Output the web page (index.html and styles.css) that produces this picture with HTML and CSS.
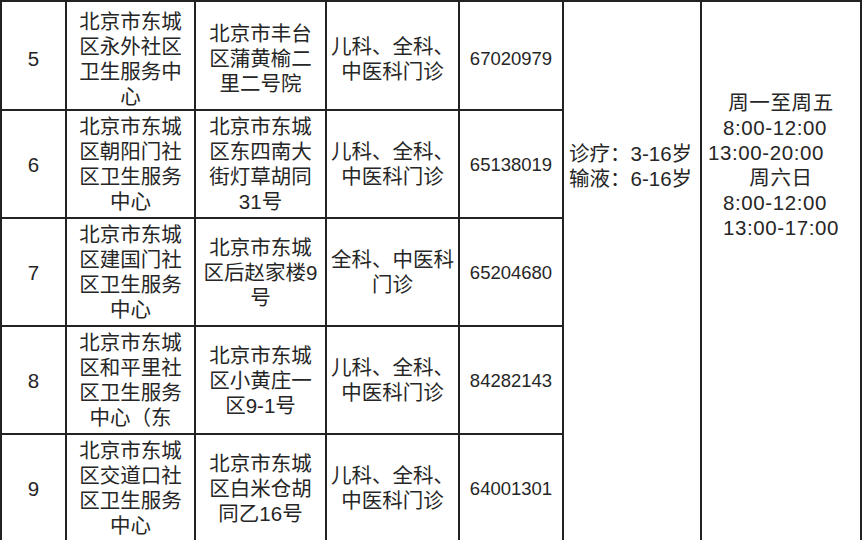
FILE: index.html
```html
<!DOCTYPE html>
<html lang="zh-CN">
<head>
<meta charset="utf-8">
<title>社区卫生服务中心</title>
<link rel="stylesheet" href="styles.css">
</head>
<body>
<div class="sheet">
  <div class="cell idx r1">5</div>
  <div class="cell r1">北京市东城<br>区永外社区<br>卫生服务中<br>心</div>
  <div class="cell r1">北京市丰台<br>区蒲黄榆二<br>里二号院</div>
  <div class="cell r1">儿科、全科、<br>中医科门诊</div>
  <div class="cell phone r1">67020979</div>
  <div class="cell age">诊疗：3-16岁<br>输液：6-16岁</div>
  <div class="cell hours">
    <div class="hl">周一至周五</div>
    <div class="hl sa">8:00-12:00</div>
    <div class="hl sb">13:00-20:00</div>
    <div class="hl">周六日</div>
    <div class="hl sa">8:00-12:00</div>
    <div class="hl">13:00-17:00</div>
  </div>

  <div class="cell idx">6</div>
  <div class="cell">北京市东城<br>区朝阳门社<br>区卫生服务<br>中心</div>
  <div class="cell">北京市东城<br>区东四南大<br>街灯草胡同<br>31号</div>
  <div class="cell">儿科、全科、<br>中医科门诊</div>
  <div class="cell phone">65138019</div>

  <div class="cell idx">7</div>
  <div class="cell">北京市东城<br>区建国门社<br>区卫生服务<br>中心</div>
  <div class="cell">北京市东城<br>区后赵家楼9<br>号</div>
  <div class="cell">全科、中医科<br>门诊</div>
  <div class="cell phone">65204680</div>

  <div class="cell idx">8</div>
  <div class="cell">北京市东城<br>区和平里社<br>区卫生服务<br>中心（东</div>
  <div class="cell">北京市东城<br>区小黄庄一<br>区9-1号</div>
  <div class="cell">儿科、全科、<br>中医科门诊</div>
  <div class="cell phone">84282143</div>

  <div class="cell idx">9</div>
  <div class="cell">北京市东城<br>区交道口社<br>区卫生服务<br>中心</div>
  <div class="cell">北京市东城<br>区白米仓胡<br>同乙16号</div>
  <div class="cell">儿科、全科、<br>中医科门诊</div>
  <div class="cell phone">64001301</div>
</div>
</body>
</html>
```
FILE: styles.css
```css
html, body {
  margin: 0;
  padding: 0;
  background: #ffffff;
}
body {
  width: 864px;
  height: 540px;
  overflow: hidden;
}
.sheet {
  display: grid;
  grid-template-columns: 65px 129px 131px 133px 104px 138px 160px;
  grid-template-rows: 109px repeat(4, 108px);
  width: max-content;
  border-left: 2px solid #222;
  border-top: 2px solid #222;
  font-family: "Liberation Sans", "Noto Sans CJK SC", sans-serif;
  font-size: 20.5px;
  line-height: 25px;
  color: #262626;
}
.cell {
  box-sizing: border-box;
  border-right: 2px solid #222;
  border-bottom: 2px solid #222;
  display: flex;
  flex-direction: column;
  align-items: center;
  justify-content: center;
  text-align: center;
  overflow: hidden;
}
.r1 {
  padding-top: 6px;
}
.phone {
  font-size: 18.5px;
}
.age {
  grid-column: 6;
  grid-row: 1 / span 5;
  border-bottom: none;
  justify-content: flex-start;
  align-items: flex-start;
  text-align: left;
  padding: 139px 0 0 5px;
}
.hours {
  grid-column: 7;
  grid-row: 1 / span 5;
  border-bottom: none;
  justify-content: flex-start;
  padding-top: 88px;
}
.hl {
  letter-spacing: 0.6px;
}
.sa {
  padding-right: 12px;
}
.sb {
  padding-right: 30px;
}
```
